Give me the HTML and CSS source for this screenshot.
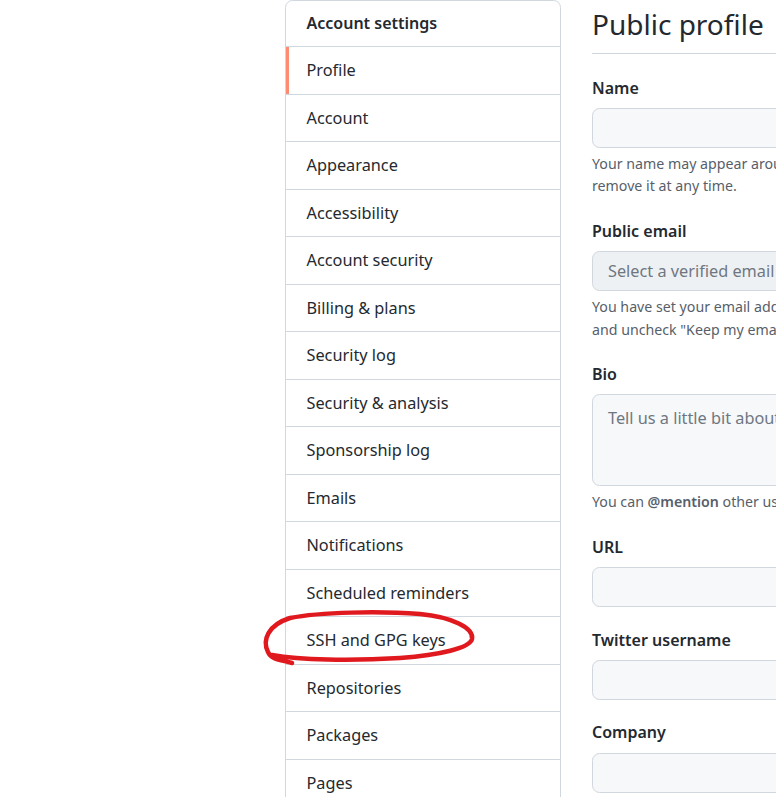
FILE: index.html
```html
<!DOCTYPE html>
<html lang="en">
<head>
<meta charset="utf-8">
<title>Public profile</title>
<link rel="stylesheet" href="styles.css">
</head>
<body>
<div class="page">
  <nav class="menu">
    <div class="menu-heading">Account settings</div>
    <a class="menu-item selected">Profile</a>
    <a class="menu-item">Account</a>
    <a class="menu-item">Appearance</a>
    <a class="menu-item">Accessibility</a>
    <a class="menu-item">Account security</a>
    <a class="menu-item">Billing &amp; plans</a>
    <a class="menu-item">Security log</a>
    <a class="menu-item">Security &amp; analysis</a>
    <a class="menu-item">Sponsorship log</a>
    <a class="menu-item">Emails</a>
    <a class="menu-item">Notifications</a>
    <a class="menu-item">Scheduled reminders</a>
    <a class="menu-item">SSH and GPG keys</a>
    <a class="menu-item">Repositories</a>
    <a class="menu-item">Packages</a>
    <a class="menu-item">Pages</a>
  </nav>
  <main class="main">
    <h1 class="title">Public profile</h1>
    <div class="form-group">
      <label class="label">Name</label>
      <div class="input"></div>
      <p class="note">Your name may appear around GitHub where you contribute or are mentioned. You can<br>remove it at any time.</p>
    </div>
    <div class="form-group">
      <label class="label">Public email</label>
      <div class="input select">Select a verified email to display</div>
      <p class="note">You have set your email address to private. To toggle email privacy, go to email settings<br>and uncheck "Keep my email address private".</p>
    </div>
    <div class="form-group">
      <label class="label">Bio</label>
      <div class="input textarea">Tell us a little bit about yourself</div>
      <p class="note">You can <strong>@mention</strong> other users and organizations to link to them.</p>
    </div>
    <div class="form-group">
      <label class="label">URL</label>
      <div class="input"></div>
    </div>
    <div class="form-group">
      <label class="label">Twitter username</label>
      <div class="input"></div>
    </div>
    <div class="form-group">
      <label class="label">Company</label>
      <div class="input"></div>
    </div>
  </main>
</div>
<svg class="annotation" width="776" height="797" viewBox="0 0 776 797" xmlns="http://www.w3.org/2000/svg">
  <path d="M 292 663 C 282 660, 271 660, 268 652 C 262 640, 268 625, 290 618 C 320 612, 380 611, 420 614 C 452 617, 474 628, 472 639 C 470 648, 440 655, 400 658 C 350 661, 300 660, 272 655" fill="none" stroke="#e0191f" stroke-width="4.5" stroke-linecap="round" stroke-linejoin="round"/>
</svg>
</body>
</html>
```
FILE: styles.css
```css
* { box-sizing: border-box; }
html, body { margin: 0; padding: 0; }
body {
  background: #ffffff;
  color: #24292f;
  font-family: "Noto Sans", "Open Sans", sans-serif;
  font-size: 16.3px;
  overflow: hidden;
  width: 776px;
  height: 797px;
  position: relative;
}
.page {
  display: flex;
  align-items: flex-start;
  gap: 31px;
  padding-left: 285px;
}
.menu {
  flex: 0 0 276px;
  display: flex;
  flex-direction: column;
  border: 1px solid #d0d7de;
  border-radius: 7.5px;
  overflow: hidden;
}
.menu-heading, .menu-item {
  padding: 10px 20px 10px 20.5px;
  line-height: 26.5px;
  border-top: 1px solid #d0d7de;
}
.menu-heading {
  border-top: 0;
  padding-top: 9px;
  padding-bottom: 9.5px;
  font-weight: 600;
  font-size: 16px;
}
.menu-item { color: #24292f; position: relative; }
.menu-item.selected::before {
  content: "";
  position: absolute;
  left: 0; top: 0; bottom: 0;
  width: 2.5px;
  background: #fd8c73;
}
.main {
  flex: 0 0 600px;
}
.title {
  margin: 5px 0 0;
  padding-bottom: 10px;
  border-bottom: 1px solid #d0d7de;
  font-size: 28px;
  font-weight: 400;
  line-height: 38px;
}
.form-group { margin: 19.5px 0; }
.form-group:first-of-type { margin-top: 20.5px; }
.label {
  display: block;
  font-weight: 600;
  font-size: 16px;
  line-height: 26.25px;
  margin-bottom: 7px;
}
.input {
  height: 40px;
  background: #f6f8fa;
  border: 1px solid #d0d7de;
  border-radius: 7.5px;
  padding: 0 15px;
  line-height: 38px;
  color: #6e7781;
}
.select { background: #eef1f4; }
.textarea {
  height: 92px;
  line-height: 26px;
  padding-top: 10px;
}
.note {
  margin: 5px 0 0;
  padding-bottom: 0.5px;
  font-size: 14.2px;
  line-height: 22.5px;
  color: #57606a;
  white-space: nowrap;
}
.note strong { font-weight: 600; color: #57606a; }
.annotation {
  position: absolute;
  left: 0; top: 0;
  pointer-events: none;
}
```
